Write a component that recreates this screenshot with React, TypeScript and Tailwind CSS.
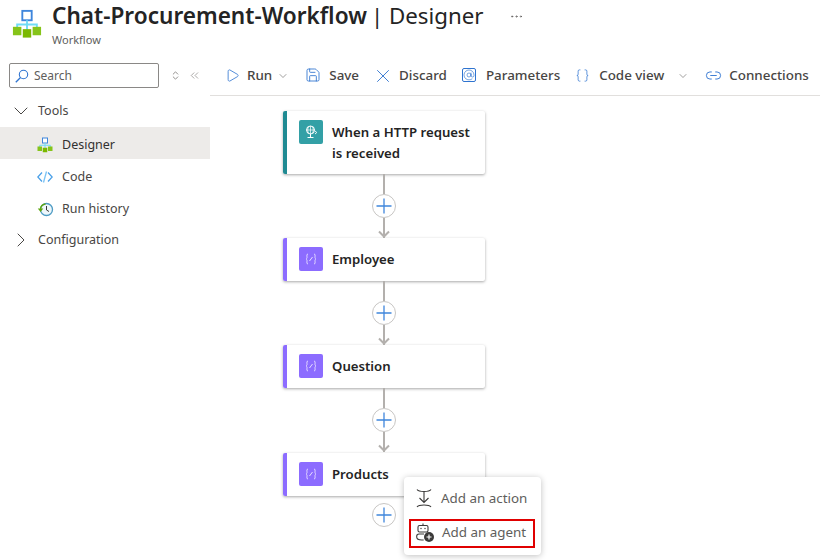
import { ChevronDown, ChevronRight, Play, Save, X, AtSign, Braces, Link2, ChevronsUpDown, ChevronsLeft, MoreHorizontal } from "lucide-react";

function WorkflowIcon({ size }: { size: number }) {
  return (
    <svg width={size} height={size} viewBox="0 0 32 32" fill="none">
      <rect x="11" y="2" width="10" height="10" fill="#fff" stroke="#3f86dc" strokeWidth="2" />
      <path d="M16 12v10M5.500 21v-4.500h21V21" stroke="#6fdcf5" strokeWidth="2" />
      <rect x="1" y="19" width="9" height="9" fill="#86c41a" />
      <rect x="11.500" y="21.500" width="9" height="9" fill="#7ab800" />
      <rect x="22" y="19" width="9" height="9" fill="#86c41a" />
    </svg>
  );
}

function SearchIcon() {
  return (
    <svg width="14" height="14" viewBox="0 0 14 14" fill="none" stroke="#2f74d0" strokeWidth="1.100">
      <circle cx="8.500" cy="5.500" r="4.200" />
      <path d="M5.500 8.500.8 13.200" strokeWidth="1.300" />
    </svg>
  );
}

function VariableIcon() {
  return (
    <svg width="14" height="14" viewBox="0 0 14 14" fill="none" stroke="#e6dcff" strokeWidth="1">
      <path d="M4 2C2.500 2 3 4 3 5.500 3 6.500 2 7 2 7s1 .5 1 1.500C3 10 2.500 12 4 12" />
      <path d="M10 2c1.500 0 1 2 1 3.500 0 1 1 1.500 1 1.500s-1 .5-1 1.500C11 10 11.500 12 10 12" />
      <path d="M5.500 9 8.500 5" />
    </svg>
  );
}

function RequestIcon() {
  return (
    <svg width="16" height="16" viewBox="0 0 16 16" fill="none" stroke="#ffffff" strokeWidth="1">
      <circle cx="7.500" cy="6" r="4" />
      <path d="M3.500 6h8M7.500 2v8M5.500 3c-1 2-1 4 0 6M9.500 3c1 2 1 4 0 6" strokeWidth=".7" />
      <path d="M7.500 10v3M4.500 13.500h6" />
      <path d="M12 10l1.800-1.500L12 7" strokeWidth=".9" />
    </svg>
  );
}

function CodeIcon() {
  return (
    <svg width="16" height="16" viewBox="0 0 16 16" fill="none" strokeWidth="1.300">
      <path d="M5 3.500.8 8 5 12.500" stroke="#4aa0e8" />
      <path d="M11 3.500 15.200 8 11 12.500" stroke="#4aa0e8" />
      <path d="M9.500 2.500 6.500 13.500" stroke="#7cc4f5" />
    </svg>
  );
}

function HistoryIcon() {
  return (
    <svg width="17" height="17" viewBox="0 0 17 17" fill="none">
      <circle cx="9.500" cy="8.500" r="6" stroke="#4d9bc4" strokeWidth="1.300" fill="#eef7fb" />
      <path d="M9.500 5v4l2.500 1.500" stroke="#3b3a39" strokeWidth="1" />
      <path d="M.8 7.500 3.500 11l2.800-3.500z" fill="#5ea60f" />
      <path d="M3.500 8.500c0-3 2-5 5-5.500" stroke="#5ea60f" strokeWidth="1.300" />
    </svg>
  );
}

function ActionIcon() {
  return (
    <svg width="20" height="22" viewBox="0 0 20 22" fill="none" stroke="#3b3a39" strokeWidth="1.100">
      <path d="M3 2.500c1 1.500 2.500 2 7 2s6-.5 7-2" />
      <path d="M10 5v10M5.500 11l4.500 4.500 4.500-4.500" />
      <path d="M3 20c1-1.500 2.500-2 7-2s6 .5 7 2" />
    </svg>
  );
}

function AgentIcon() {
  return (
    <svg width="20" height="20" viewBox="0 0 20 20" fill="none" stroke="#3b3a39" strokeWidth="1.100">
      <path d="M8 .5v2" />
      <rect x="3" y="2.500" width="10" height="6.500" rx="1.500" />
      <circle cx="6" cy="5.500" r=".7" fill="#3b3a39" stroke="none" />
      <circle cx="10" cy="5.500" r=".7" fill="#3b3a39" stroke="none" />
      <path d="M9 11H4a2.300 2.300 0 0 0-2.300 2.300V14c0 2 2 3 5 3h2" />
      <circle cx="14" cy="14" r="5" fill="#3b3a39" stroke="none" />
      <path d="M14 11.500v5M11.500 14h5" stroke="#fff" strokeWidth="1.200" />
    </svg>
  );
}

function ToolButton({ icon, label, className }: { icon: React.ReactNode; label: string; className: string }) {
  return (
    <div className={`flex items-center ${className}`}>
      {icon}
      <span className="text-[13.4px] font-medium text-[#484644] whitespace-nowrap">{label}</span>
    </div>
  );
}

function SideItem({ icon, label, active }: { icon: React.ReactNode; label: string; active?: boolean }) {
  return (
    <div className={`flex h-8 items-center pl-[37px] pt-[4px] text-[12.5px] ${active ? "bg-[#edebe9] text-[#323130]" : "text-[#484644]"}`}>
      <span className="flex w-[25px] shrink-0">{icon}</span>
      <span>{label}</span>
    </div>
  );
}

function Card({ title, variant = "var", tall }: { title: React.ReactNode; variant?: "var" | "http"; tall?: boolean }) {
  return (
    <div className={`flex w-[202px] rounded-[2px] bg-white shadow-[0_1px_3px_rgba(0,0,0,0.35)] ${tall ? "h-[63px]" : "h-[43px]"}`}>
      <div className={`w-1 shrink-0 rounded-l-[2px] ${variant === "http" ? "bg-[#1f8a92]" : "bg-[#8c6cff]"}`} />
      <div className="flex flex-1 items-start gap-[9px] pt-[9px] pl-[12px]">
        <div className={`flex size-6 shrink-0 items-center justify-center rounded-[2px] ${variant === "http" ? "bg-[#33a0a6]" : "bg-[#8c6cff]"}`}>
          {variant === "http" ? <RequestIcon /> : <VariableIcon />}
        </div>
        <div className="pt-[2px] text-[13.2px] font-semibold leading-[21px] text-[#242424] whitespace-nowrap">{title}</div>
      </div>
    </div>
  );
}

function PlusButton() {
  return (
    <div className="flex size-6 shrink-0 items-center justify-center rounded-full border border-[#c8c6c4] bg-white">
      <svg width="16" height="16" viewBox="0 0 16 16" stroke="#3f86dc" strokeWidth="1.300">
        <path d="M8 .5v15M.5 8h15" />
      </svg>
    </div>
  );
}

function Connector({ className = "" }: { className?: string }) {
  return (
    <div className={`ml-[89px] flex h-16 flex-col items-center ${className}`}>
      <div className="h-5 w-0.5 bg-[#b3b0ad]" />
      <PlusButton />
      <div className="relative h-5 w-0.5 bg-[#b3b0ad]">
        <svg className="absolute -left-[5px] bottom-0" width="12" height="8" viewBox="0 0 12 8" fill="none" stroke="#b3b0ad" strokeWidth="2">
          <path d="M1 1.500 6 6.500 11 1.500" />
        </svg>
      </div>
    </div>
  );
}

export default function App() {
  return (
    <div className="h-[560px] w-[820px] overflow-hidden bg-white font-['Noto_Sans',sans-serif] text-[13px]">
      <header className="flex h-[56px] items-start pl-[12px]">
        <div className="pt-[9px]"><WorkflowIcon size={30} /></div>
        <div className="ml-[10px] pt-[2px]">
          <div className="flex items-baseline text-[22.6px] leading-[28px] text-[#242424] whitespace-nowrap">
            <span className="font-semibold">Chat-Procurement-Workflow</span>
            <span className="ml-[4px] text-[22.3px] font-normal">| Designer</span>
            <MoreHorizontal className="ml-[25px] self-center text-[#605e5c]" size={15} strokeWidth={1.2} />
          </div>
          <div className="mt-[3px] text-[11px] leading-[14px] text-[#605e5c]">Workflow</div>
        </div>
      </header>

      <div className="flex">
        <aside className="w-[210px] shrink-0">
          <div className="flex h-[39px] items-center pl-[9px]">
            <div className="flex h-[25px] w-[150px] items-center gap-[5px] rounded-[2px] border border-[#8a8886] pl-[5px] text-[#605e5c]">
              <SearchIcon />
              <span className="text-[12px]">Search</span>
            </div>
            <ChevronsUpDown size={11} className="ml-[11px] text-[#8a8886]" />
            <ChevronsLeft size={13} className="ml-[7px] text-[#8a8886]" strokeWidth={1.3} />
          </div>
          <div className="flex h-8 items-center pl-[9px] text-[12.5px] text-[#484644]">
            <ChevronDown size={24} strokeWidth={1} className="mr-[5px]" />
            Tools
          </div>
          <SideItem active icon={<WorkflowIcon size={16} />} label="Designer" />
          <SideItem icon={<CodeIcon />} label="Code" />
          <SideItem icon={<HistoryIcon />} label="Run history" />
          <div className="flex h-[30px] items-center pl-[9px] pt-[4px] text-[12.5px] text-[#484644]">
            <ChevronRight size={24} strokeWidth={1} className="mr-[5px]" />
            Configuration
          </div>
        </aside>

        <main className="min-w-0 flex-1">
          <div className="flex h-[40px] items-center border-b border-[#e1dfdd] pl-[15px]">
            <ToolButton className="gap-[7px]" icon={<Play size={15} strokeWidth={1.3} className="text-[#2f74d0]" />} label="Run" />
            <ChevronDown size={12} strokeWidth={1.2} className="ml-[5px] text-[#605e5c]" />
            <ToolButton className="ml-[16px] gap-[8px]" icon={<Save size={16} strokeWidth={1.3} className="text-[#2f74d0]" />} label="Save" />
            <ToolButton className="ml-[13px] gap-[5px]" icon={<X size={22} strokeWidth={1} className="text-[#2f74d0]" />} label="Discard" />
            <ToolButton className="ml-[15px] gap-[10px]" icon={<AtSign size={14} strokeWidth={1.3} className="rounded-[2px] border border-[#2f74d0] text-[#2f74d0]" />} label="Parameters" />
            <ToolButton className="ml-[15px] gap-[9px]" icon={<Braces size={15} strokeWidth={1.2} className="text-[#2f74d0]" />} label="Code view" />
            <ChevronDown size={12} strokeWidth={1.2} className="ml-[13px] text-[#605e5c]" />
            <ToolButton className="ml-[16px] gap-[7px]" icon={<Link2 size={17} strokeWidth={1.3} className="text-[#2f74d0]" />} label="Connections" />
          </div>

          <div className="relative flex flex-col items-start pl-[73px] pt-[15px]">
            <Card tall variant="http" title={<>When a HTTP request<br />is received</>} />
            <Connector />
            <Card title="Employee" />
            <Connector />
            <Card title="Question" />
            <Connector className="mb-px" />
            <Card title="Products" />
            <div className="ml-[89px] mt-[7px]"><PlusButton /></div>

            <div className="absolute left-[194px] top-[381px] h-[78px] w-[137px] rounded-[4px] bg-white px-[5px] pt-[8px] text-[13.4px] text-[#605e5c] shadow-[0_1px_6px_rgba(0,0,0,0.25)]">
              <div className="flex h-[26px] items-center gap-[7px] pl-[5px]">
                <ActionIcon />
                <span className="whitespace-nowrap">Add an action</span>
              </div>
              <div className="mt-[8px] flex h-[29px] w-[126px] items-center gap-[7px] border-2 border-[#e00000] pb-[2px] pl-[4px] leading-none">
                <AgentIcon />
                <span className="whitespace-nowrap">Add an agent</span>
              </div>
            </div>
          </div>
        </main>
      </div>
    </div>
  );
}
